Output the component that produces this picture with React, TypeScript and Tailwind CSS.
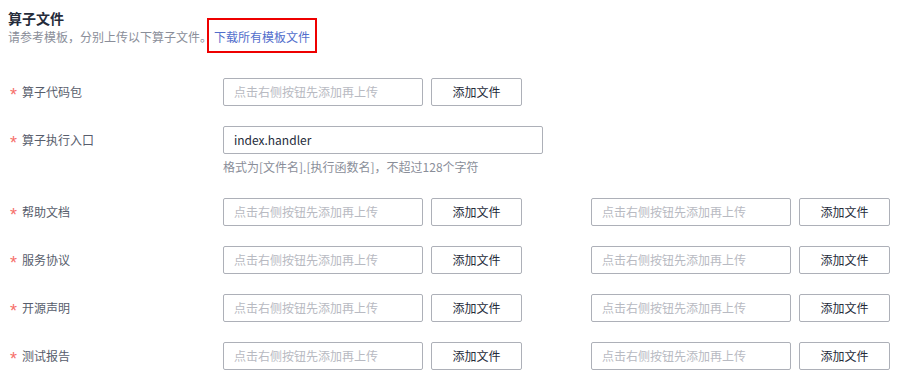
import type { ReactNode } from "react"

const font = { fontFamily: '"Noto Sans CJK SC", "Noto Sans", sans-serif' }

function FileInput({ wide, value }: { wide?: boolean; value?: string }) {
  return (
    <div
      className={`h-[28px] ${wide ? "w-[320px]" : "w-[200px]"} border border-[#adb0b8] rounded-[2px] bg-white flex items-center px-[10px] text-[12px] ${
        value ? "text-[#252b3a]" : "text-[#b8bac2]"
      }`}
    >
      {value ?? "点击右侧按钮先添加再上传"}
    </div>
  )
}

function AddButton() {
  return (
    <button
      type="button"
      className="h-[28px] w-[91px] ml-[8px] border border-[#adb0b8] rounded-[2px] bg-white text-[12px] text-[#252b3a] flex items-center justify-center"
    >
      添加文件
    </button>
  )
}

function Uploader() {
  return (
    <div className="flex items-center">
      <FileInput />
      <AddButton />
    </div>
  )
}

function Row({ label, children }: { label: string; children: ReactNode }) {
  return (
    <div className="flex items-start">
      <div className="w-[215px] h-[28px] flex items-center text-[12px] text-[#575d6c]">
        <span
          className="w-[14px] pl-[2px] text-[#f66f6a] text-[18px] leading-none relative top-[3px]"
          style={{ fontFamily: '"Liberation Sans", sans-serif' }}
        >
          *
        </span>
        {label}
      </div>
      {children}
    </div>
  )
}

export default function App() {
  const doubles = ["帮助文档", "服务协议", "开源声明", "测试报告"]
  return (
    <div className="w-[900px] h-[382px] bg-white px-[8px] pt-[8px]" style={font}>
      <div className="text-[14px] leading-[20px] font-bold text-[#252b3a]">算子文件</div>
      <div className="flex text-[12px] leading-[18px] text-[#8a8e99]">
        <span>请参考模板，分别上传以下算子文件。</span>
        <span className="relative ml-[2px] text-[#526ecc]">
          下载所有模板文件
          <span className="absolute -left-[7px] -right-[7px] -top-[10px] -bottom-[7px] border-2 border-[#ee0000] pointer-events-none" />
        </span>
      </div>
      <div className="mt-[32px] flex flex-col gap-[20px]">
        <Row label="算子代码包">
          <Uploader />
        </Row>
        <div className="mb-[2px]">
          <Row label="算子执行入口">
            <div>
              <FileInput wide value="index.handler" />
              <div className="mt-[4px] text-[12px] leading-[18px] text-[#8a8e99]">
                格式为[文件名].[执行函数名]，不超过128个字符
              </div>
            </div>
          </Row>
        </div>
        {doubles.map((d) => (
          <Row key={d} label={d}>
            <div className="flex items-center gap-[69px]">
              <Uploader />
              <Uploader />
            </div>
          </Row>
        ))}
      </div>
    </div>
  )
}
